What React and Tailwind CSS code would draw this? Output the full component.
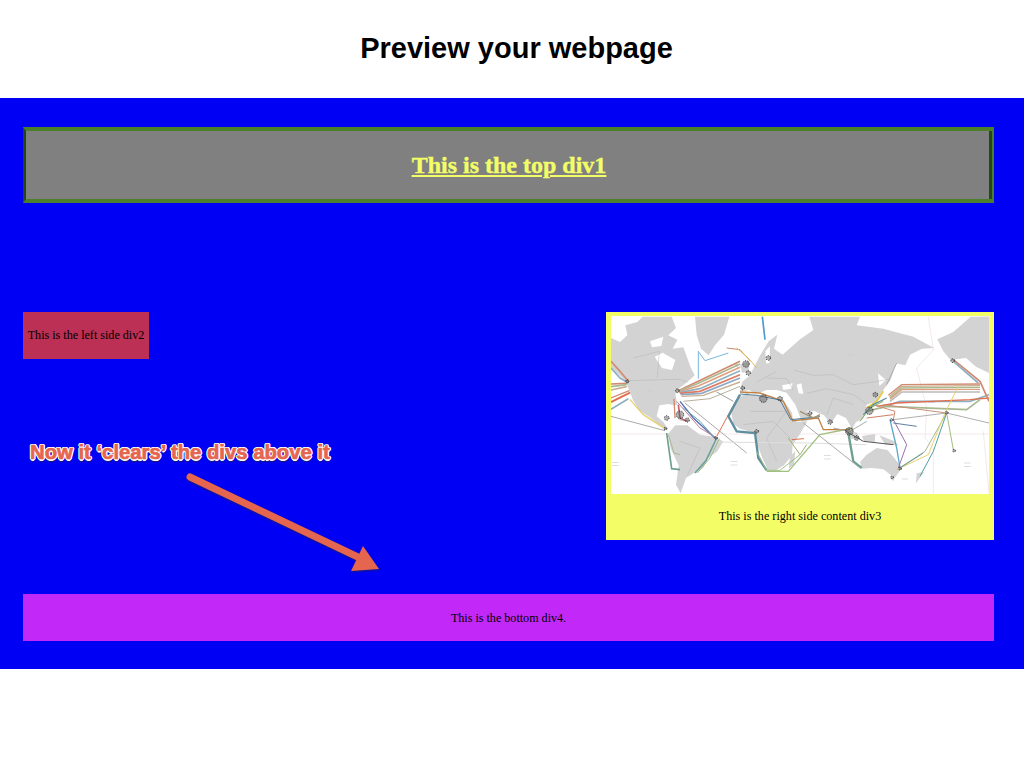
const land = [
  // north america
  "33,100 60,112 82,92 76,62 112,52 128,36 215,36 228,70 205,92 232,105 218,132 250,128 272,188 284,212 262,232 238,250 226,268 232,300 222,302 205,298 178,302 170,335 190,352 204,372 196,376 150,338 118,318 100,288 88,258 76,228 33,190",
  "285,36 388,36 372,90 345,122 326,152 303,132 290,90",
  // south america
  "204,388 226,362 262,362 300,390 340,396 370,410 352,440 322,462 310,490 280,506 258,520 242,566 228,540 236,482 212,432",
  // africa
  "392,312 412,282 440,264 490,272 522,284 550,286 572,318 592,352 622,350 600,388 578,420 576,452 552,482 528,497 504,497 488,462 472,420 462,384 420,372 400,358",
  // europe and asia
  "420,262 426,232 450,212 478,156 506,110 532,90 522,132 548,150 600,104 640,76 628,36 780,36 770,62 850,72 940,96 1002,130 966,132 930,150 916,182 888,176 872,226 846,262 822,292 800,300 790,342 768,352 756,372 738,340 712,328 692,358 672,332 640,318 640,342 606,352 586,300 560,264 530,256 500,256 470,268 446,256",
  // far east, alaska
  "1012,104 1060,82 1112,36 1167,36 1167,205 1128,186 1098,160 1052,166 1030,140",
  // australia
  "780,472 800,450 830,430 862,436 880,456 906,490 884,520 850,494 816,490 786,492",
  // islands
  "736,376 772,384 780,402 754,402",
  "786,394 826,388 824,412 792,410",
  "838,392 880,408 896,422 856,420",
  "420,180 448,168 446,202 426,204",
  "402,176 416,178 412,190",
  "872,520 884,520 880,530",
  "950,506 972,502 948,536",
  "570,456 586,438 582,478 566,492",
  "828,262 846,256 826,300 808,318",
  "232,340 262,344 272,352 240,348",
  "1140,36 1167,36 1167,70 1138,60",
];

const water = [
  "164,156 188,144 226,166 216,196 186,190",
  "150,110 190,96 184,124 156,128",
  "444,262 500,262 540,272 534,282 490,268 448,272",
  "546,242 578,236 574,252 550,256",
  "590,240 604,236 610,268 596,266",
  "574,300 590,352 578,340",
  "620,318 650,322 642,340",
  "496,140 510,124 508,176 498,176",
  "834,206 858,226 838,244",
];

const borders = [
  "76,228 238,224 262,232",
  "100,160 178,140 172,220",
  "582,196 640,212 700,210 760,240 820,232 866,224",
  "620,266 680,252 760,270 800,298",
  "680,330 700,280 760,300",
  "450,320 560,320 500,400 530,470",
  "430,360 520,350 570,400",
  "238,410 300,430 262,512",
  "500,220 560,222 580,256",
  "470,232 530,200",
];

const faint = [
  "33,388 1167,388",
  "985,36 1000,136 950,190 980,310 975,400 1000,430 1000,566",
  "1150,380 1167,566",
];

const labels = [[36, 472], [36, 482], [392, 470], [392, 480], [672, 452], [672, 462], [1092, 474], [1092, 484], [740, 150], [140, 258], [985, 292], [905, 522]];

const dots = [
  [232, 258, 8], [240, 330, 16], [200, 340, 10], [262, 346, 9], [438, 178, 14], [445, 205, 10], [505, 160, 10],
  [428, 250, 8], [490, 282, 16], [540, 282, 10], [630, 326, 8], [690, 352, 10], [748, 380, 16], [770, 400, 10],
  [808, 318, 16], [826, 270, 10], [875, 346, 6], [1040, 324, 6], [1058, 168, 8], [82, 230, 7], [196, 372, 6],
  [348, 400, 6], [470, 380, 8], [900, 492, 6], [1062, 438, 6], [876, 518, 6],
];

const cables = [
  ["#4f9bd0", "487,36 495,105", 5],
  ["#7ab8dc", "295,140 295,222", 3],
  ["#7ab8dc", "295,140 315,168 385,145", 3],
  ["#c98a70", "380,130 420,135 452,170", 3],
  ["#e0c060", "410,130 445,160 470,190", 3],

  // transatlantic fan
  ["#d28a70", "235,258 290,232 420,170", 5],
  ["#a8b890", "235,260 290,238 420,178", 5],
  ["#e0a080", "236,262 295,244 420,188", 5],
  ["#8fb0c0", "238,264 300,252 420,198", 5],
  ["#e07a60", "240,266 300,260 420,210", 5],
  ["#8fa8c8", "242,270 305,266 420,220", 5],
  ["#c8b090", "245,275 310,272 420,232", 4],
  ["#b8b0a0", "250,290 330,282 420,245", 3],
  ["#a0a0a0", "350,262 400,290", 3],

  // west coast
  ["#d28a70", "33,170 60,200 85,230", 5],
  ["#8fb0c0", "33,190 60,220 85,235", 5],
  ["#d28a70", "33,238 80,236", 5],
  ["#a8b890", "33,246 80,240", 5],
  ["#c8b090", "33,256 80,246", 5],
  ["#e07050", "33,292 90,264", 6],
  ["#d28a70", "33,280 88,258", 4],
  ["#8fb0c0", "33,314 85,282", 5],
  ["#e8d070", "90,285 130,330 195,372", 4],
  ["#aaaaaa", "33,335 195,378", 3],

  // americas
  ["#70a090", "200,385 215,492 240,495", 5],
  ["#a8b890", "205,390 222,445 240,450", 3],
  ["#c06070", "235,300 240,340 260,350", 5],
  ["#d28a70", "222,282 225,340", 4],
  ["#4f70b0", "240,290 280,340 345,400", 4],
  ["#c08090", "230,290 300,370 350,400", 3],
  ["#70a0b0", "250,310 300,350 340,395", 3],
  ["#aaaaaa", "255,295 440,445", 3],
  ["#dddddd", "335,412 620,415 800,420", 3],
  ["#70a0a0", "350,400 318,468 285,505", 5],
  ["#a0c080", "358,402 330,460 292,505", 3],
  ["#e07050", "410,285 350,395", 3],

  // around africa
  ["#5f8f9f", "420,270 385,335 410,380 465,385 475,460 500,497", 7],
  ["#a0c080", "500,500 565,500 660,390 760,370", 4],
  ["#a0c080", "470,440 500,497 540,497 600,450", 3],
  ["#a0b070", "565,400 600,450 620,420", 3],
  ["#c08040", "420,262 480,265 550,290 578,348 655,340 670,375 750,375", 4],
  ["#4f7f9f", "420,268 470,272 540,286 572,345 660,336", 3],
  ["#e07050", "575,405 612,402", 3],
  ["#a09070", "600,320 640,340 660,330", 4],

  // south east asia, australia
  ["#70a090", "745,385 760,470 785,490", 7],
  ["#aaaaaa", "610,355 780,490", 3],
  ["#aaaaaa", "700,370 750,380 800,350", 3],

  // transpacific bands
  ["#d28a70", "865,272 905,240 1140,238", 4],
  ["#c8b090", "868,276 905,245 1140,243", 4],
  ["#a8b890", "870,280 905,250 1140,248", 4],
  ["#e0a080", "870,284 905,255 1140,254", 4],
  ["#bbbbbb", "870,290 905,262 1140,262", 5],
  ["#8fb0c0", "840,310 900,290 1110,290 1167,270", 5],
  ["#e07050", "830,305 890,295 1110,285 1167,280", 4],
  ["#a8b890", "800,320 860,305 1100,315 1140,285", 5],
  ["#c8907a", "850,300 1040,325", 3],
  ["#d28a70", "1060,165 1140,230 1167,290", 5],
  ["#8fb0c0", "1060,170 1135,235", 5],
  ["#a8b890", "1040,325 975,440 890,495", 3],
  ["#50a0a0", "1040,325 1000,440 960,515", 3],
  ["#e8d070", "1075,245 1035,325 985,450 890,495", 3],
  ["#a0c080", "1040,325 1060,435", 3],
  ["#b0b0b0", "880,345 1040,325 1167,355", 3],
  ["#5fa8c8", "870,345 890,430 900,490", 4],
  ["#9a70b0", "880,345 920,420 895,490", 3],
  ["#70a0a0", "900,490 970,445", 3],
  ["#d28a70", "820,300 885,320 880,345", 3],
  ["#e8c840", "800,310 830,290 850,260", 5],
  ["#5f8fa0", "790,330 820,300 860,280", 4],
  ["#80b060", "780,350 810,310 850,290", 3],
  ["#d08060", "800,340 880,330", 3],
  ["#6080a0", "880,355 950,365", 3],
  ["#555555", "735,378 790,410 880,420", 3],
  ["#aaaaaa", "860,240 890,175", 3],
];

const WorldMap = () => (
  <svg viewBox="33 35 1134 532" className="block w-[378px] h-[178px] bg-white blur-[0.4px]">
    {faint.map((p, i) => <polyline key={i} points={p} fill="none" stroke="#f0dcdc" strokeWidth="2" />)}
    {land.map((p, i) => <polygon key={i} points={p} fill="#d3d3d3" />)}
    {water.map((p, i) => <polygon key={i} points={p} fill="#fff" />)}
    {borders.map((p, i) => <polyline key={i} points={p} fill="none" stroke="#b4b4b4" strokeWidth="1.5" />)}
    {labels.map(([x, y], i) => <rect key={i} x={x} y={y} width="20" height="2" fill="#cccccc" />)}
    {cables.map(([c, p, w], i) => <polyline key={i} points={p} fill="none" stroke={c} strokeWidth={w} />)}
    {dots.map(([x, y, r], i) => <circle key={i} cx={x} cy={y} r={r * 0.7} fill="#555" fillOpacity="0.45" stroke="#222" strokeWidth="3" strokeDasharray="3 4" />)}
  </svg>
);

const App = () => {
  return (
    <div className="w-[1024px] h-[768px] bg-white overflow-hidden font-['Liberation_Serif',serif] text-black">
      <h1 className="h-[98px] pl-[9px] flex items-center justify-center font-['Liberation_Sans',sans-serif] font-bold text-[29px]">Preview your webpage</h1>
      <section className="relative h-[571px] bg-[#0000f5] pt-[29px] pl-[23px] pr-[30px]">
        <div className="h-[76px] flex items-center justify-center bg-[#808080] border-y-4 border-y-[#4c7f2a] border-l-[3px] border-l-[#1f4a16] border-r-[2px] border-r-[#4c7f2a] shadow-[inset_-3px_0_0_#1f4a16]">
          <h2 className="font-bold text-[24px] underline text-[#f3fe66] [-webkit-text-stroke:0.4px_#f3fe66]">This is the top div1</h2>
        </div>
        <div className="mt-[109px] flex justify-between items-start">
          <div className="w-[126px] h-[47px] pb-[1px] flex items-center justify-center bg-[#bb3054] text-[12.1px]">This is the left side div2</div>
          <div className="w-[388px] h-[228px] bg-[#f3fe66] p-[5px] pt-[4px]">
            <WorldMap />
            <p className="mt-[13px] text-center text-[12.15px]">This is the right side content div3</p>
          </div>
        </div>
        <div className="mt-[54px] h-[47px] pt-[1px] flex items-center justify-center bg-[#c229f8] text-[12.1px]">This is the bottom div4.</div>

        <p className="absolute left-[30px] top-[340px] font-['Liberation_Sans',sans-serif] font-bold text-[20.3px] leading-[28px] whitespace-nowrap text-[#e5654f] [-webkit-text-stroke:0.7px_#e5654f] [text-shadow:-1.5px_0_0_#fff,1.5px_0_0_#fff,0_-1.5px_0_#fff,0_1.5px_0_#fff,-1px_-1px_0_#fff,1px_-1px_0_#fff,-1px_1px_0_#fff,1px_1px_0_#fff,0_2.5px_1px_#1a1a60]">Now it ‘clears’ the divs above it</p>
        <svg viewBox="0 0 205 110" className="absolute left-[180px] top-[370px] w-[205px] h-[110px] drop-shadow-[0_1px_1px_#1a1a70]">
          <line x1="10" y1="9" x2="180" y2="90" stroke="#e5654f" strokeWidth="7" strokeLinecap="round" />
          <polygon points="183,78 199,101 171,103" fill="#e5654f" />
        </svg>
      </section>
    </div>
  );
};

export default App;
